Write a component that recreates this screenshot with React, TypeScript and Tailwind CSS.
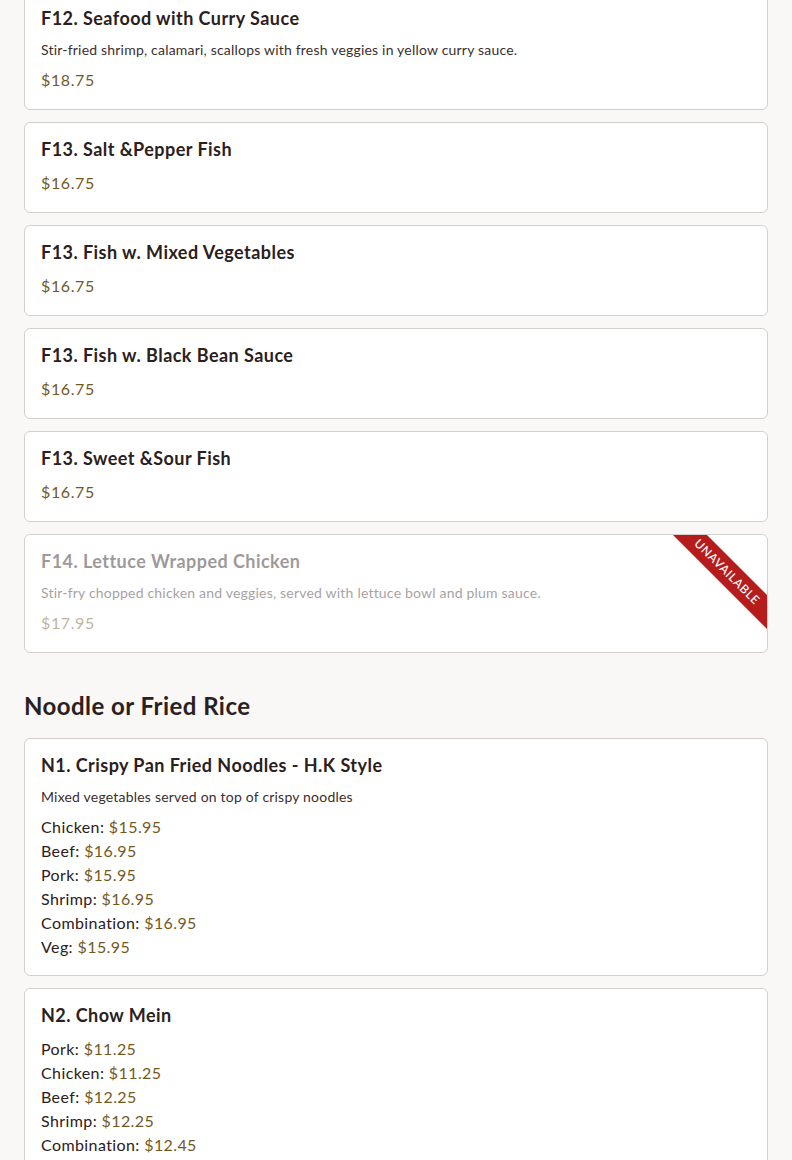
import React from 'react'

type Item = {
    name: string
    desc?: string
    price?: string
    options?: [string, string][]
    unavailable?: boolean
}

const seafood: Item[] = [
    { name: 'F12. Seafood with Curry Sauce', desc: 'Stir-fried shrimp, calamari, scallops with fresh veggies in yellow curry sauce.', price: '$18.75' },
    { name: 'F13. Salt &Pepper Fish', price: '$16.75' },
    { name: 'F13. Fish w. Mixed Vegetables', price: '$16.75' },
    { name: 'F13. Fish w. Black Bean Sauce', price: '$16.75' },
    { name: 'F13. Sweet &Sour Fish', price: '$16.75' },
    { name: 'F14. Lettuce Wrapped Chicken', desc: 'Stir-fry chopped chicken and veggies, served with lettuce bowl and plum sauce.', price: '$17.95', unavailable: true },
]

const noodles: Item[] = [
    {
        name: 'N1. Crispy Pan Fried Noodles - H.K Style',
        desc: 'Mixed vegetables served on top of crispy noodles',
        options: [
            ['Chicken', '$15.95'],
            ['Beef', '$16.95'],
            ['Pork', '$15.95'],
            ['Shrimp', '$16.95'],
            ['Combination', '$16.95'],
            ['Veg', '$15.95'],
        ],
    },
    {
        name: 'N2. Chow Mein',
        options: [
            ['Pork', '$11.25'],
            ['Chicken', '$11.25'],
            ['Beef', '$12.25'],
            ['Shrimp', '$12.25'],
            ['Combination', '$12.45'],
            ['Veg', '$11.25'],
        ],
    },
]

function MenuCard({ item }: { item: Item }) {
    return (
        <div className="relative overflow-hidden bg-white border border-[#d3d0cc] rounded-md p-4">
            <div className={item.unavailable ? 'opacity-45' : ''}>
                <h3 className="text-[18px] leading-[22px] font-bold tracking-[0.45px] text-[#2b2020] mb-[11px] -mt-px">{item.name}</h3>
                {item.desc && (
                    <p className="text-[14px] leading-5 tracking-[0.2px] text-[#3b2e2e] mb-2">{item.desc}</p>
                )}
                {item.price && (
                    <div className="text-[16px] leading-6 tracking-[0.6px] text-[#74591f] mb-px">{item.price}</div>
                )}
                {item.options && (
                    <div className="text-[16px] leading-6 tracking-[0.4px]">
                        {item.options.map(([label, price]) => (
                            <div key={label}>
                                <span className="text-[#2b2020]">{label}: </span>
                                <span className="text-[#74591f]">{price}</span>
                            </div>
                        ))}
                    </div>
                )}
            </div>

            {/* Unavailable ribbon */}
            {item.unavailable && (
                <div className="absolute right-[-42px] top-[25px] w-[164px] h-[24px] rotate-45 bg-[#b71c1c] flex items-center justify-center">
                    <span className="text-[12px] font-medium tracking-[0.6px] text-white uppercase">Unavailable</span>
                </div>
            )}
        </div>
    )
}

export default function App() {
    return (
        <div className="min-h-screen bg-[#f9f8f6] overflow-hidden" style={{ fontFamily: 'Lato, "Noto Sans", sans-serif' }}>
            <div className="px-6 -mt-[9px] pb-10">
                <div className="flex flex-col gap-3">
                    {seafood.map((item) => (
                        <MenuCard key={item.name} item={item} />
                    ))}
                </div>

                <h2 className="mt-[37px] mb-4 text-[24px] leading-8 font-bold tracking-[0.45px] text-[#2b2020]">Noodle or Fried Rice</h2>

                <div className="flex flex-col gap-3">
                    {noodles.map((item) => (
                        <MenuCard key={item.name} item={item} />
                    ))}
                </div>
            </div>
        </div>
    )
}
